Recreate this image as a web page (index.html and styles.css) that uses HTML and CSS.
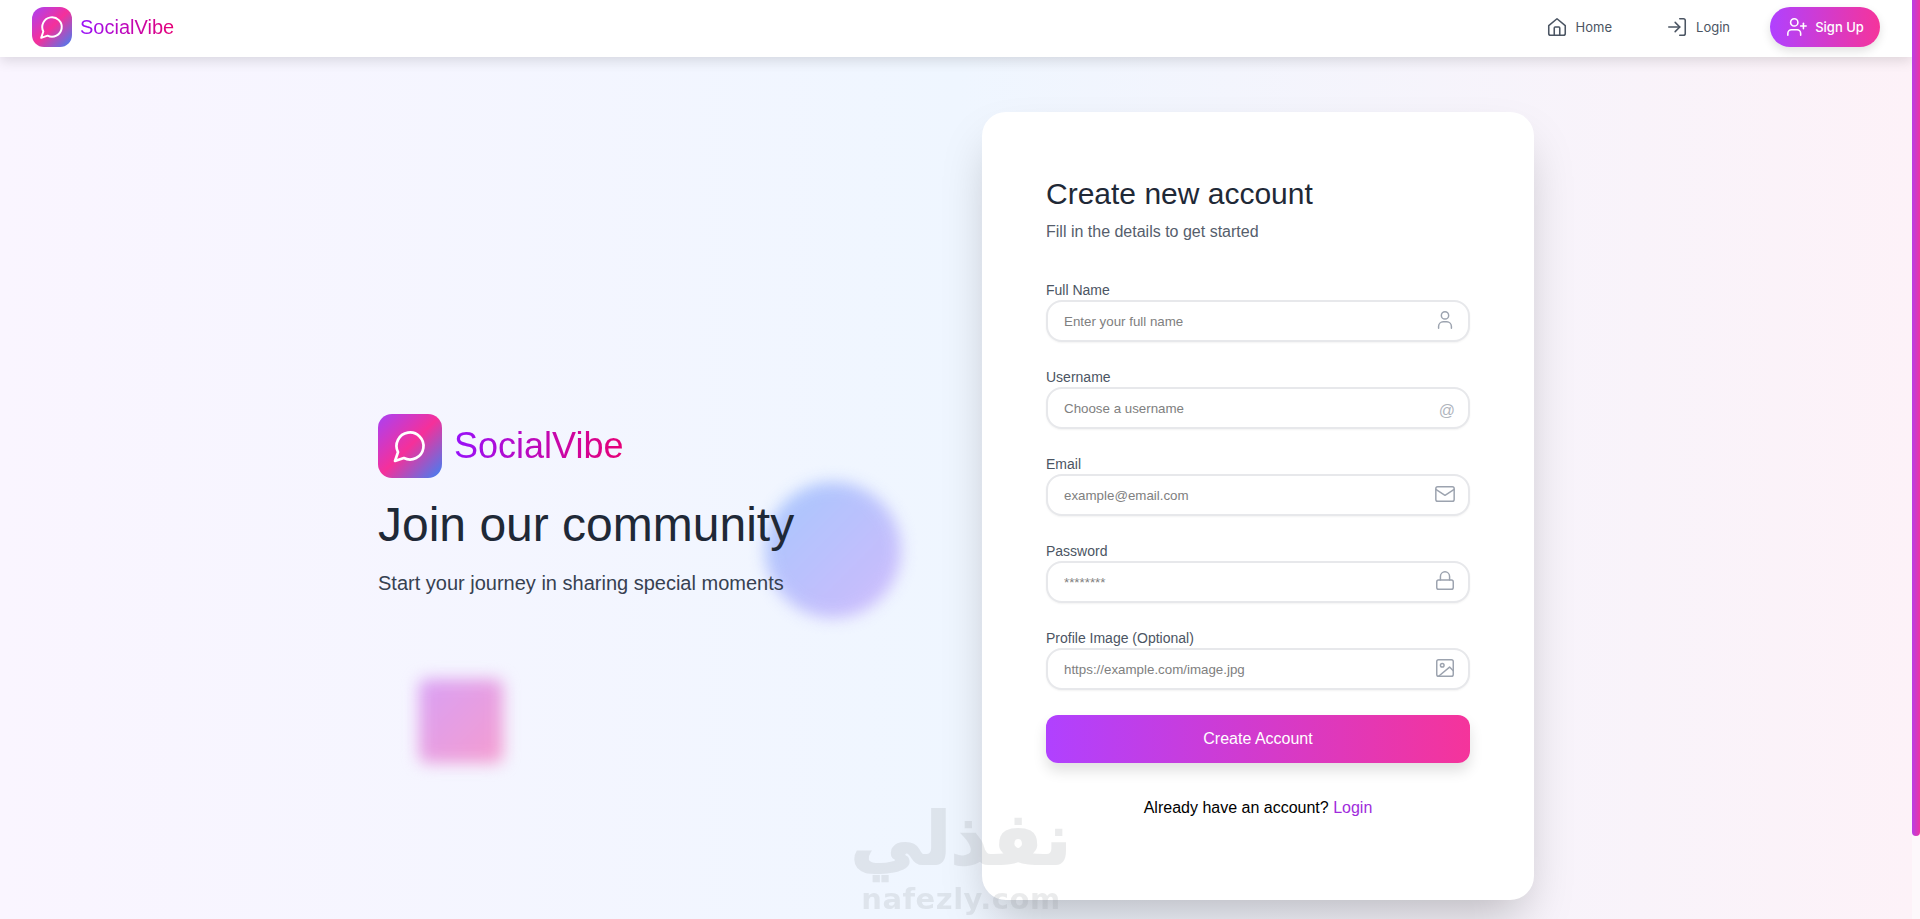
FILE: index.html
```html
<!DOCTYPE html>
<html lang="en">
<head>
    <meta charset="UTF-8">
    <meta name="viewport" content="width=device-width, initial-scale=1.0">
    <title>SocialVibe - Sign Up</title>
    <link rel="stylesheet" href="styles.css">
</head>
<body>
    <div class="viewport">
        <nav class="navbar">
            <a class="brand" href="#">
                <span class="logo-box">
                    <svg viewBox="0 0 24 24" class="logo-icon"><path d="M7.9 20A9 9 0 1 0 4 16.1L2 22Z"/></svg>
                </span>
                <span class="brand-text">SocialVibe</span>
            </a>
            <div class="nav-links">
                <a class="nav-link" href="#">
                    <svg viewBox="0 0 24 24" class="nav-icon"><path d="M3 10.5 12 3l9 7.5V19a2 2 0 0 1-2 2H5a2 2 0 0 1-2-2Z"/><path d="M9 21v-8a1 1 0 0 1 1-1h4a1 1 0 0 1 1 1v8"/></svg>
                    Home
                </a>
                <a class="nav-link" href="#">
                    <svg viewBox="0 0 24 24" class="nav-icon"><path d="M15 3h4a2 2 0 0 1 2 2v14a2 2 0 0 1-2 2h-4"/><path d="m10 17 5-5-5-5"/><path d="M15 12H3"/></svg>
                    Login
                </a>
                <a class="signup-btn" href="#">
                    <svg viewBox="0 0 24 24" class="nav-icon"><path d="M16 21v-2a4 4 0 0 0-4-4H6a4 4 0 0 0-4 4v2"/><circle cx="9" cy="7" r="4"/><path d="M19 8v6"/><path d="M22 11h-6"/></svg>
                    Sign Up
                </a>
            </div>
        </nav>

        <main class="page">
            <section class="intro">
                <div class="blob-circle"></div>
                <div class="blob-square"></div>
                <div class="intro-brand">
                    <span class="logo-box logo-box-lg">
                        <svg viewBox="0 0 24 24" class="logo-icon"><path d="M7.9 20A9 9 0 1 0 4 16.1L2 22Z"/></svg>
                    </span>
                    <span class="intro-name">SocialVibe</span>
                </div>
                <h1>Join our community</h1>
                <p class="intro-sub">Start your journey in sharing special moments</p>
            </section>

            <section class="card">
                <h2>Create new account</h2>
                <p class="card-sub">Fill in the details to get started</p>
                <form>
                    <div class="input-group">
                        <label for="name">Full Name</label>
                        <div class="input-wrap">
                            <input type="text" id="name" placeholder="Enter your full name">
                            <svg viewBox="0 0 24 24" class="field-icon"><circle cx="12" cy="7" r="4"/><path d="M5 21v-2a5 5 0 0 1 5-5h4a5 5 0 0 1 5 5v2"/></svg>
                        </div>
                    </div>
                    <div class="input-group">
                        <label for="username">Username</label>
                        <div class="input-wrap">
                            <input type="text" id="username" placeholder="Choose a username">
                            <span class="field-at">@</span>
                        </div>
                    </div>
                    <div class="input-group">
                        <label for="email">Email</label>
                        <div class="input-wrap">
                            <input type="email" id="email" placeholder="example@email.com">
                            <svg viewBox="0 0 24 24" class="field-icon"><rect x="2" y="4" width="20" height="16" rx="2"/><path d="m2 7 10 6.5L22 7"/></svg>
                        </div>
                    </div>
                    <div class="input-group">
                        <label for="password">Password</label>
                        <div class="input-wrap">
                            <input type="password" id="password" placeholder="********">
                            <svg viewBox="0 0 24 24" class="field-icon"><rect x="3" y="11" width="18" height="10" rx="2"/><path d="M7 11V7a5 5 0 0 1 10 0v4"/></svg>
                        </div>
                    </div>
                    <div class="input-group last">
                        <label for="image">Profile Image (Optional)</label>
                        <div class="input-wrap">
                            <input type="text" id="image" placeholder="https://example.com/image.jpg">
                            <svg viewBox="0 0 24 24" class="field-icon"><rect x="3" y="3" width="18" height="18" rx="2"/><circle cx="9" cy="9" r="2"/><path d="m21 15-4-4L5 21"/></svg>
                        </div>
                    </div>
                    <button type="button" class="btn">Create Account</button>
                </form>
                <p class="card-foot">Already have an account? <a href="#">Login</a></p>
            </section>
        </main>

        <div class="watermark">
            <div class="wm-ar" lang="ar" dir="rtl">نفذلي</div>
            <div class="wm-en">nafezly.com</div>
        </div>
    </div>
    <div class="scroll-thumb"></div>
</body>
</html>
```

FILE: styles.css
```css
* {
    box-sizing: border-box;
}

html, body {
    height: 100%;
    overflow: hidden;
}

body {
    margin: 0;
    padding-right: 8px;
    position: relative;
    font-family: "Liberation Sans", Arial, sans-serif;
    background-color: #fdf8fb;
}

a {
    text-decoration: none;
}

.viewport {
    height: 100%;
    position: relative;
    overflow: hidden;
    background: linear-gradient(to right, #faf5ff, #eff6ff 50%, #fdf2f8);
}

/* the page scrolls in the original, only the thumb is drawn here */
.scroll-thumb {
    position: absolute;
    top: 0;
    right: 0;
    width: 8px;
    height: 836px;
    background: linear-gradient(to right, #b83fe6, #ec34a4);
    border-radius: 0 0 4px 4px;
}

.navbar {
    height: 57px;
    padding: 7px 32px 10px;
    display: flex;
    align-items: center;
    justify-content: space-between;
    background: white;
    box-shadow: 0 4px 12px rgba(0, 0, 0, 0.12);
    position: relative;
    z-index: 2;
}

.brand {
    display: flex;
    align-items: center;
    gap: 8px;
}

.logo-box {
    width: 40px;
    height: 40px;
    border-radius: 12px;
    display: flex;
    align-items: center;
    justify-content: center;
    background: linear-gradient(135deg, #a941f5, #f5309a 50%, #3b82f6);
}

.logo-icon {
    width: 26px;
    height: 26px;
    fill: none;
    stroke: white;
    stroke-width: 1.8;
    stroke-linecap: round;
    stroke-linejoin: round;
}

.brand-text {
    font-size: 20px;
    background: linear-gradient(to right, #9810fa, #e60076);
    -webkit-background-clip: text;
    background-clip: text;
    color: transparent;
}

.nav-links {
    display: flex;
    align-items: center;
    gap: 22px;
}

.nav-link {
    display: flex;
    align-items: center;
    gap: 8px;
    padding: 0 16px;
    font-family: Inter, sans-serif;
    font-size: 13px;
    color: #4b5563;
}

.nav-icon {
    width: 22px;
    height: 22px;
    fill: none;
    stroke: currentColor;
    stroke-width: 1.7;
    stroke-linecap: round;
    stroke-linejoin: round;
}

.signup-btn {
    width: 110px;
    height: 40px;
    margin-left: 2px;
    border-radius: 20px;
    display: flex;
    align-items: center;
    justify-content: center;
    gap: 7px;
    font-family: Inter, sans-serif;
    font-size: 13px;
    font-weight: 500;
    color: white;
    background: linear-gradient(to right, #b041ff, #f5349b);
    box-shadow: 0 4px 10px rgba(0, 0, 0, 0.12);
}

.page {
    width: 1156px;
    margin: 0 auto;
    padding-top: 55px;
    display: flex;
    align-items: center;
    justify-content: space-between;
}

.intro {
    position: relative;
    width: 560px;
    padding-bottom: 1px;
}

.intro-brand {
    display: flex;
    align-items: center;
    gap: 12px;
    position: relative;
}

.logo-box-lg {
    width: 64px;
    height: 64px;
    border-radius: 14px;
}

.logo-box-lg .logo-icon {
    width: 36px;
    height: 36px;
}

.intro-name {
    font-size: 36px;
    background: linear-gradient(to right, #9810fa, #e60076);
    -webkit-background-clip: text;
    background-clip: text;
    color: transparent;
}

h1 {
    position: relative;
    margin: 19px 0 16px;
    font-size: 48px;
    font-weight: 400;
    line-height: 56px;
    color: #1f2937;
}

.intro-sub {
    position: relative;
    margin: 0;
    font-size: 20px;
    line-height: 28px;
    color: #374151;
}

.blob-circle {
    position: absolute;
    left: 387px;
    top: 68px;
    width: 136px;
    height: 136px;
    border-radius: 50%;
    background: linear-gradient(135deg, #9fc3fd, #cdb4fc);
    filter: blur(8px);
    opacity: 0.9;
}

.blob-square {
    position: absolute;
    left: 41px;
    top: 265px;
    width: 84px;
    height: 84px;
    border-radius: 8px;
    background: linear-gradient(135deg, #d8a0f5, #f59ccf);
    filter: blur(8px);
}

.card {
    width: 552px;
    height: 788px;
    padding: 64px;
    background: white;
    border-radius: 24px;
    box-shadow: 0 25px 50px -12px rgba(0, 0, 0, 0.25);
}

h2 {
    margin: 0;
    font-size: 30px;
    font-weight: 400;
    line-height: 36px;
    color: #1f2937;
}

.card-sub {
    margin: 11px 0 41px;
    font-size: 16px;
    line-height: 18px;
    color: #565e6c;
}

.input-group {
    margin-bottom: 27px;
}

.input-group.last {
    margin-bottom: 25px;
}

.input-group label {
    display: block;
    margin-bottom: 2px;
    font-size: 14px;
    line-height: 16px;
    color: #4b5563;
}

.input-wrap {
    position: relative;
}

.input-wrap input {
    display: block;
    width: 100%;
    height: 42px;
    padding: 0 48px 0 16px;
    border: 2px solid #e7e8eb;
    border-radius: 16px;
    background: white;
    box-shadow: 0 1px 2px rgba(0, 0, 0, 0.05);
    font-family: "Liberation Sans", Arial, sans-serif;
}

.input-wrap input::placeholder {
    color: #808080;
}

.field-icon {
    position: absolute;
    right: 14px;
    top: 9px;
    width: 22px;
    height: 22px;
    fill: none;
    stroke: #9ca3af;
    stroke-width: 1.6;
    stroke-linecap: round;
    stroke-linejoin: round;
}

.field-at {
    position: absolute;
    right: 15px;
    top: 15px;
    font-size: 16px;
    line-height: 18px;
    color: #b0b5bd;
}

.btn {
    display: block;
    width: 100%;
    height: 48px;
    border: none;
    border-radius: 12px;
    font-family: "Liberation Sans", Arial, sans-serif;
    font-size: 16px;
    color: white;
    background: linear-gradient(to right, #b041ff, #f5349b);
    box-shadow: 0 8px 14px rgba(0, 0, 0, 0.12);
    cursor: pointer;
}

.card-foot {
    margin: 36px 0 0;
    text-align: center;
    font-size: 16px;
    line-height: 18px;
    color: black;
}

.card-foot a {
    color: #a02bdc;
}

.watermark {
    position: absolute;
    left: 848px;
    top: 797px;
    width: 226px;
    text-align: center;
    color: #8f9499;
    opacity: 0.18;
    pointer-events: none;
    z-index: 3;
}

.wm-ar {
    font-family: "DejaVu Sans", sans-serif;
    font-size: 72px;
    font-weight: 700;
    line-height: 84px;
    -webkit-text-stroke: 2px #8f9499;
}

.wm-en {
    font-family: "DejaVu Sans", sans-serif;
    font-size: 29px;
    font-weight: 700;
    line-height: 36px;
    letter-spacing: 0.5px;
}
```
